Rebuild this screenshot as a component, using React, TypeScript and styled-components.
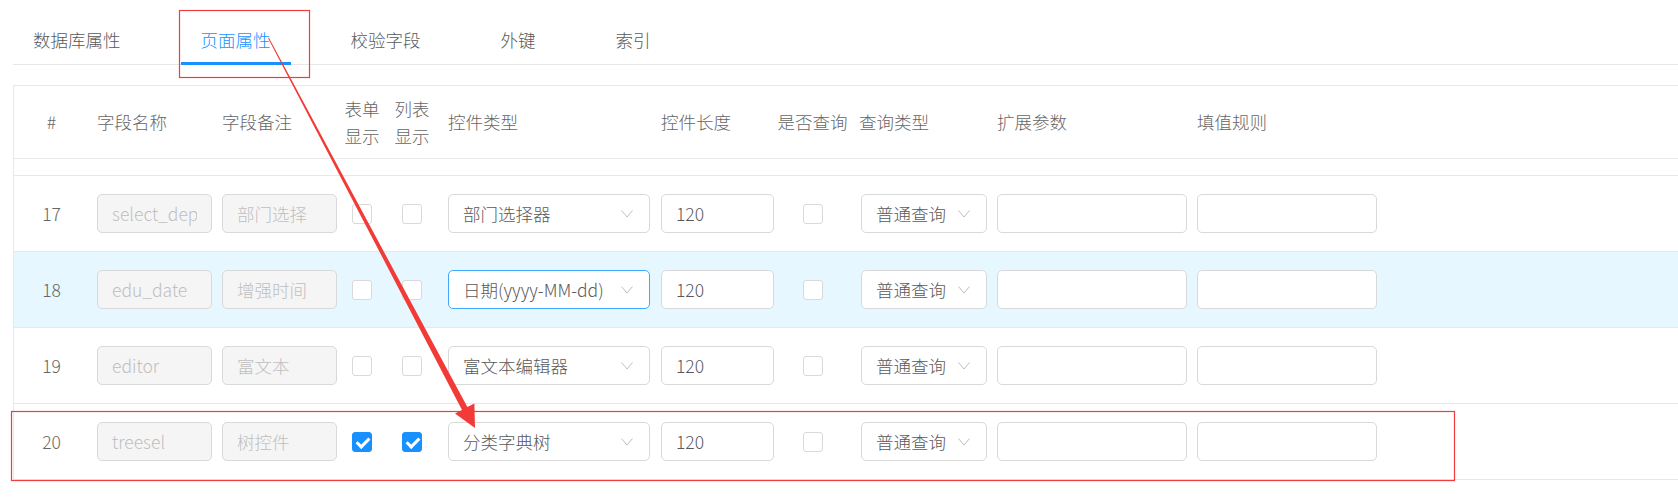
import React from "react";
import styled, { createGlobalStyle } from "styled-components";

const GlobalStyle = createGlobalStyle`
  html, body {
    margin: 0;
    padding: 0;
    background: #fff;
    overflow: hidden;
  }
  body {
    font-family: "Noto Sans CJK SC", "Noto Sans", sans-serif;
    font-weight: 300;
    color: #595959;
  }
`;

type Row = {
  no: number;
  name: string;
  remark: string;
  form: boolean;
  list: boolean;
  widget: string;
  focused?: boolean;
  active?: boolean;
};

const rows: Row[] = [
  { no: 17, name: "select_depart", remark: "部门选择", form: false, list: false, widget: "部门选择器" },
  { no: 18, name: "edu_date", remark: "增强时间", form: false, list: false, widget: "日期(yyyy-MM-dd)", focused: true, active: true },
  { no: 19, name: "editor", remark: "富文本", form: false, list: false, widget: "富文本编辑器" },
  { no: 20, name: "treesel", remark: "树控件", form: true, list: true, widget: "分类字典树" },
];

const tabs = ["数据库属性", "页面属性", "校验字段", "外键", "索引"];

export default function App() {
  return (
    <Page>
      <GlobalStyle />
      <TabNav>
        {tabs.map((t) => (
          <Tab key={t} $active={t === "页面属性"}>
            {t}
          </Tab>
        ))}
      </TabNav>

      <Table>
        <HeaderRow>
          <Cell $center $padRight={8}>#</Cell>
          <Cell>字段名称</Cell>
          <Cell>字段备注</Cell>
          <Cell $center>
            <TwoLine>表单<br />显示</TwoLine>
          </Cell>
          <Cell $center>
            <TwoLine>列表<br />显示</TwoLine>
          </Cell>
          <Cell $pad={6}>控件类型</Cell>
          <Cell $pad={6}>控件长度</Cell>
          <Cell $center>是否查询</Cell>
          <Cell $pad={8}>查询类型</Cell>
          <Cell $pad={5}>扩展参数</Cell>
          <Cell $pad={5}>填值规则</Cell>
          <Cell />
        </HeaderRow>
        <Spacer />
        {rows.map((r) => (
          <DataRow key={r.no} $active={r.active}>
            <Cell $center $padRight={8}>{r.no}</Cell>
            <Cell>
              <TextInput $w={115} value={r.name} disabled readOnly />
            </Cell>
            <Cell>
              <TextInput $w={115} value={r.remark} disabled readOnly />
            </Cell>
            <Cell $center>
              <Check $checked={r.form} />
            </Cell>
            <Cell $center>
              <Check $checked={r.list} />
            </Cell>
            <Cell $pad={6}>
              <Select $w={202} $focused={r.focused}>
                <span>{r.widget}</span>
                <Chevron />
              </Select>
            </Cell>
            <Cell $pad={6}>
              <TextInput $w={113} value="120" readOnly />
            </Cell>
            <Cell $center>
              <Check />
            </Cell>
            <Cell $pad={10}>
              <Select $w={126}>
                <span>普通查询</span>
                <Chevron />
              </Select>
            </Cell>
            <Cell $pad={5}>
              <TextInput $w={190} value="" readOnly />
            </Cell>
            <Cell $pad={5}>
              <TextInput $w={180} value="" readOnly />
            </Cell>
            <Cell />
          </DataRow>
        ))}
      </Table>

      <Annotations width="1678" height="498" viewBox="0 0 1678 498">
        <rect x="179.5" y="10.5" width="130" height="67" fill="none" stroke="#f03c3c" strokeWidth="1.2" />
        <rect x="11.5" y="411.5" width="1443" height="69" fill="none" stroke="#f03c3c" strokeWidth="1.2" />
        <polygon
          points="268.9,37.8 467.4,407.1 474.4,403.4 475,428 455.0,413.6 462.0,409.9 268.1,38.2"
          fill="#f23a36"
        />
      </Annotations>
    </Page>
  );
}

function Chevron() {
  return (
    <ChevronSvg width="12" height="8" viewBox="0 0 12 8">
      <polyline points="0.5,0.5 6,7 11.5,0.5" fill="none" stroke="#bfbfbf" strokeWidth="1" />
    </ChevronSvg>
  );
}

const Page = styled.div`
  position: relative;
  width: 1678px;
  height: 498px;
  overflow: hidden;
  font-size: 17.5px;
`;

const TabNav = styled.div`
  display: flex;
  margin-left: 13px;
  height: 64px;
  border-bottom: 1px solid #e8e8e8;
`;

const Tab = styled.div<{ $active?: boolean }>`
  position: relative;
  display: flex;
  align-items: center;
  box-sizing: border-box;
  height: 64px;
  padding: 16px 20px 0;
  margin-right: 40px;
  line-height: 26px;
  color: ${(p) => (p.$active ? "#1890ff" : "#595959")};

  &::after {
    content: "";
    display: ${(p) => (p.$active ? "block" : "none")};
    position: absolute;
    left: 0;
    right: 0;
    bottom: -1px;
    height: 3px;
    background: #1890ff;
  }
`;

const Table = styled.div`
  margin: 20px 0 0 13px;
  border-top: 1px solid #e8e8e8;
  border-left: 1px solid #e8e8e8;
`;

const gridCols = `83px 125px 120px 40px 60px 213px 119px 77px 141px 200px 190px 1fr`;

const HeaderRow = styled.div`
  display: grid;
  grid-template-columns: ${gridCols};
  align-items: center;
  height: 72px;
  border-bottom: 1px solid #e8e8e8;
  color: #666;
  line-height: 26px;
`;

const Spacer = styled.div`
  height: 16px;
  border-bottom: 1px solid #e8e8e8;
`;

const DataRow = styled.div<{ $active?: boolean }>`
  display: grid;
  grid-template-columns: ${gridCols};
  align-items: center;
  height: 75px;
  border-bottom: 1px solid #e8e8e8;
  background: ${(p) => (p.$active ? "#e6f7ff" : "#fff")};
  color: #666;
`;

const Cell = styled.div<{ $pad?: number; $padRight?: number; $center?: boolean }>`
  display: flex;
  align-items: center;
  justify-content: ${(p) => (p.$center ? "center" : "flex-start")};
  padding-left: ${(p) => p.$pad ?? 0}px;
  padding-right: ${(p) => p.$padRight ?? 0}px;
  min-width: 0;
  white-space: nowrap;
`;

const TwoLine = styled.div`
  line-height: 27px;
  text-align: center;
`;

const TextInput = styled.input<{ $w: number }>`
  box-sizing: border-box;
  width: ${(p) => p.$w}px;
  height: 39px;
  padding: 0 14px;
  border: 1px solid #d9d9d9;
  border-radius: 5px;
  background: #fff;
  font: inherit;
  font-size: 17.5px;
  color: #595959;
  outline: none;

  &:disabled {
    background: #f5f5f5;
    color: #bfbfbf;
    -webkit-text-fill-color: #bfbfbf;
    opacity: 1;
  }
`;

const Select = styled.div<{ $w: number; $focused?: boolean }>`
  box-sizing: border-box;
  display: flex;
  align-items: center;
  justify-content: space-between;
  width: ${(p) => p.$w}px;
  height: 39px;
  padding: 0 16px 0 14px;
  border: 1px solid ${(p) => (p.$focused ? "#40a9ff" : "#d9d9d9")};
  border-radius: 5px;
  background: #fff;
  color: #595959;
  overflow: hidden;
`;

const ChevronSvg = styled.svg`
  flex: none;
  margin-left: 8px;
`;

const Check = styled.span<{ $checked?: boolean }>`
  position: relative;
  box-sizing: border-box;
  display: block;
  width: 20px;
  height: 20px;
  border: 1px solid ${(p) => (p.$checked ? "#1890ff" : "#d9d9d9")};
  border-radius: 3px;
  background: ${(p) => (p.$checked ? "#1890ff" : "#fff")};

  &::after {
    content: "";
    display: ${(p) => (p.$checked ? "block" : "none")};
    position: absolute;
    left: 5.5px;
    top: 2px;
    width: 5px;
    height: 10px;
    border: solid #fff;
    border-width: 0 3px 3px 0;
    transform: rotate(45deg);
  }
`;

const Annotations = styled.svg`
  position: absolute;
  top: 0;
  left: 0;
  pointer-events: none;
`;
